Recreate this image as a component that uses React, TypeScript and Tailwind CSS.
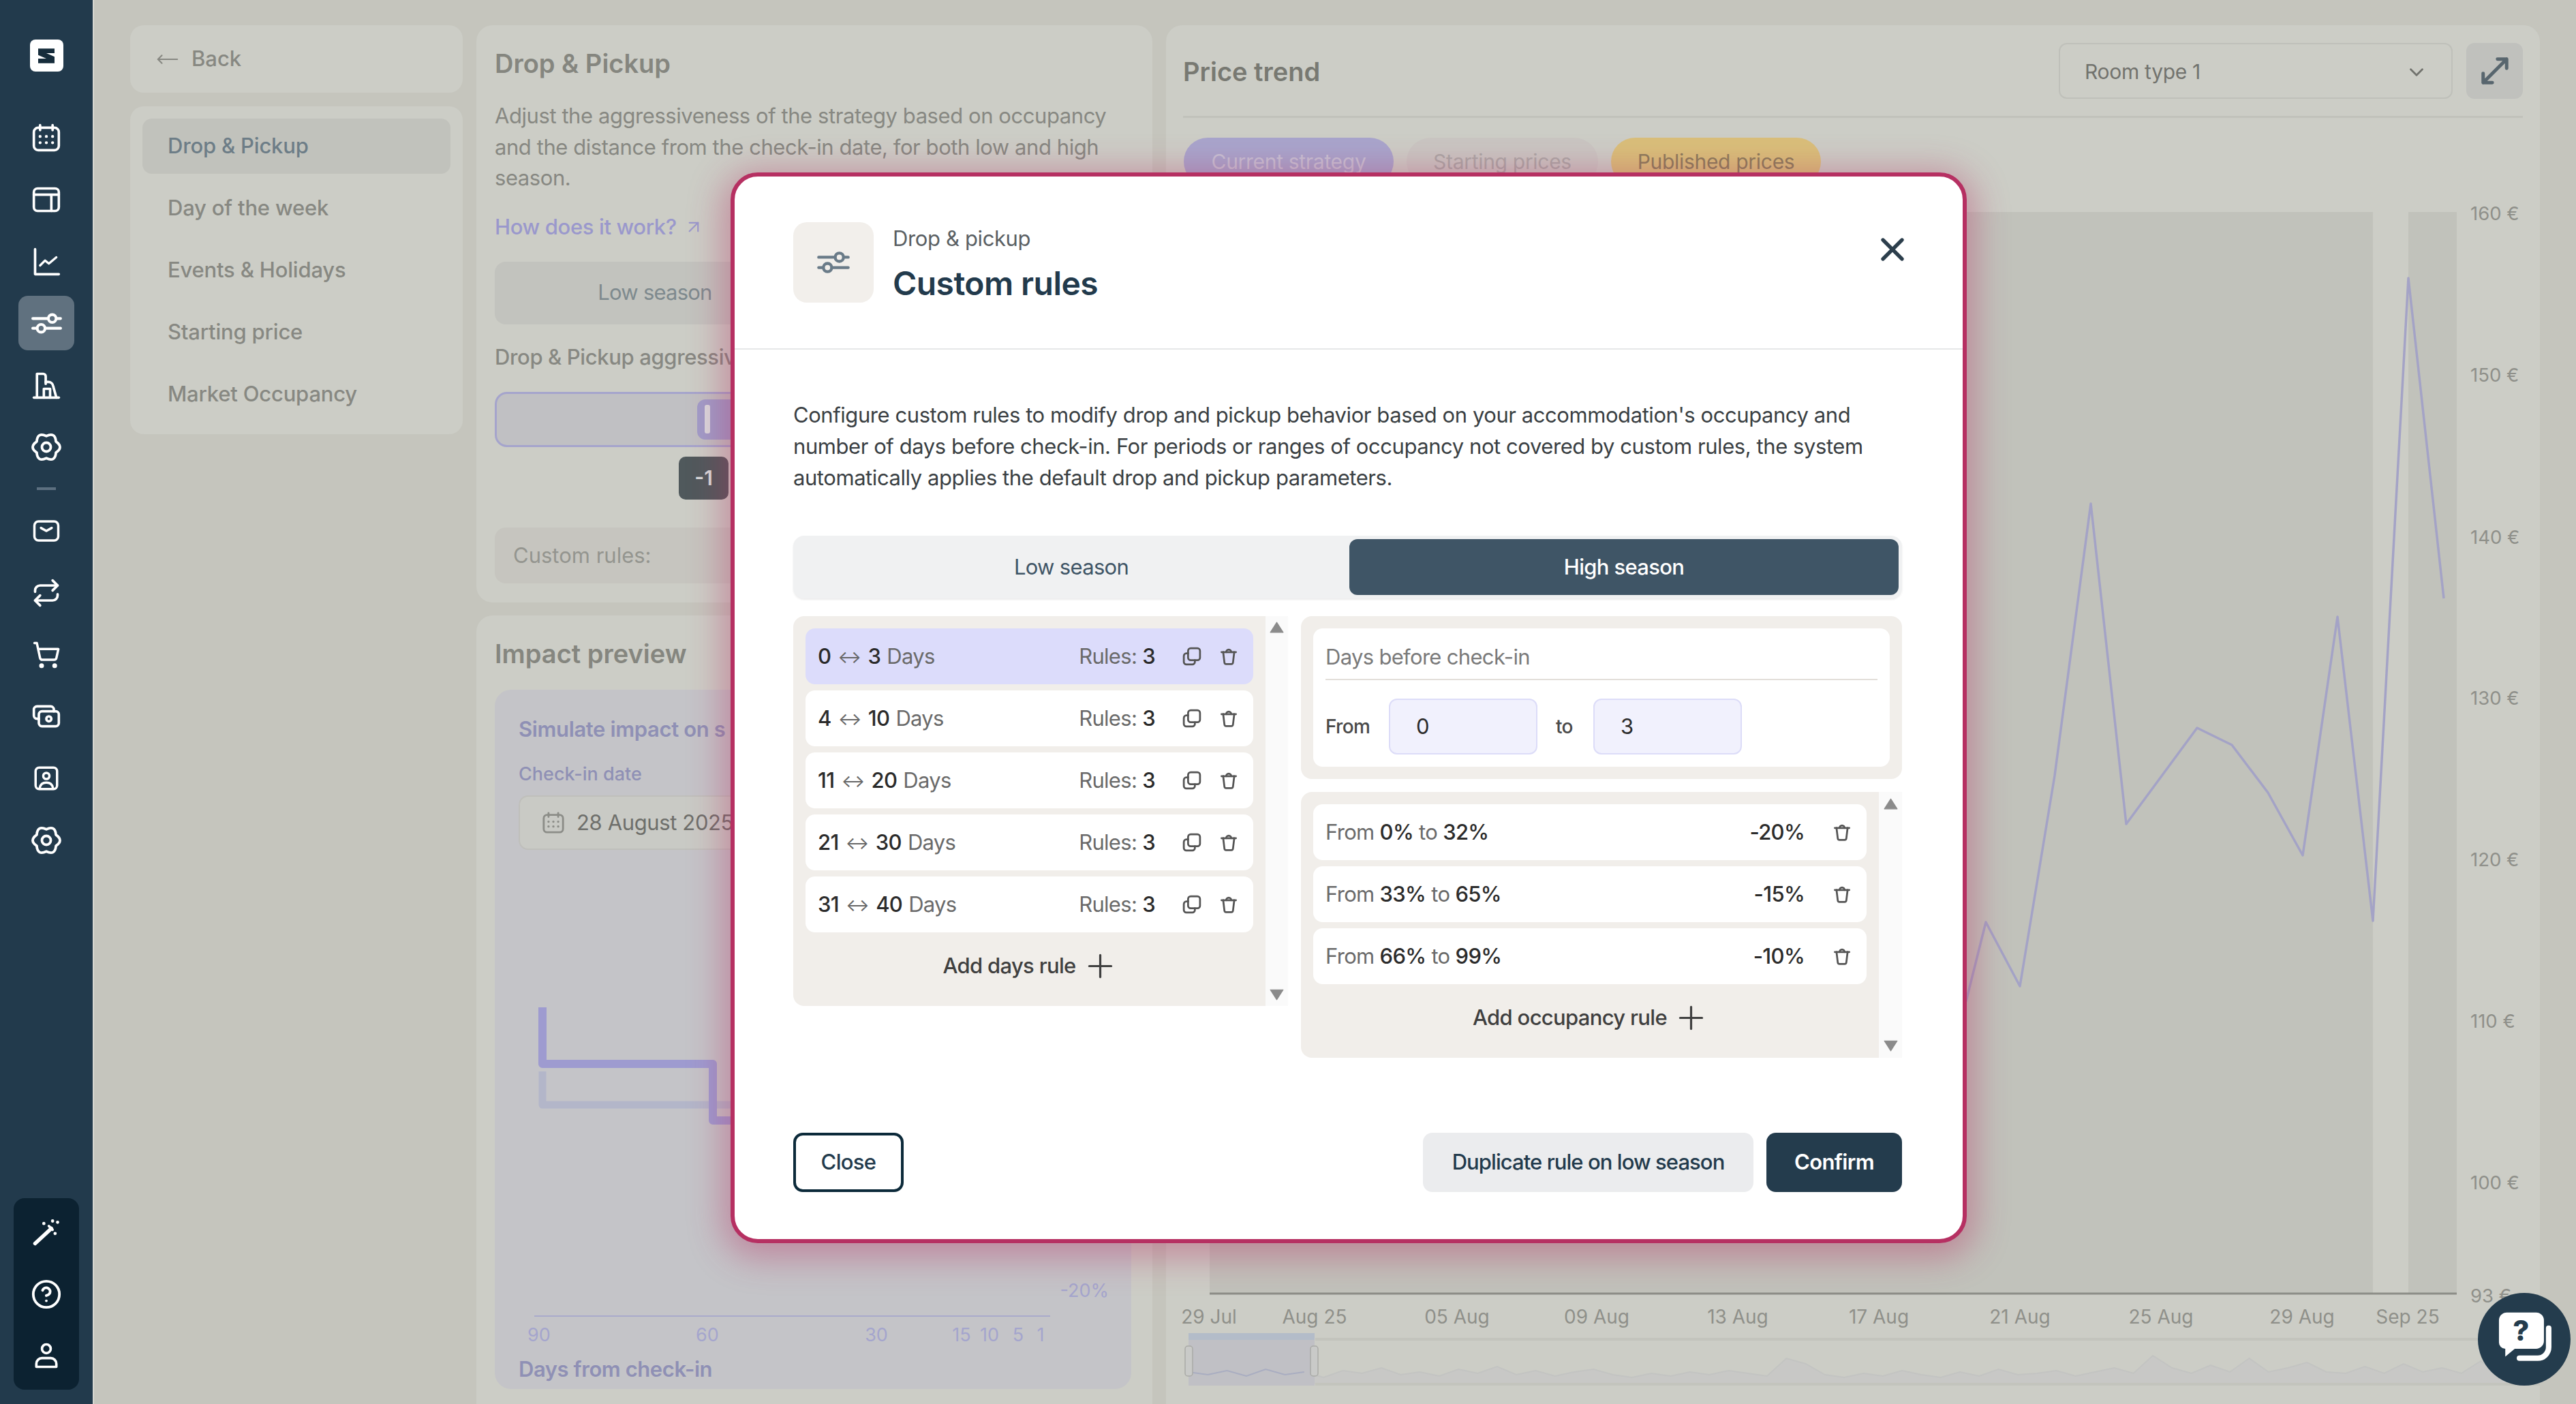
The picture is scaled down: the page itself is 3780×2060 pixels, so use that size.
import React from "react";
import { ChevronDown, Repeat, ShoppingCart, Plus, X, MoveLeft, ArrowUpRight, CircleHelp } from "lucide-react";

const sw = { fill: "none", stroke: "currentColor", strokeWidth: 2, strokeLinecap: "round", strokeLinejoin: "round" } as const;

const Svg = ({ className, children }: { className?: string; children: React.ReactNode }) => (
  <svg viewBox="0 0 24 24" className={className} {...sw}>
    {children}
  </svg>
);

const CalendarIcon = ({ className = "w-[44px] h-[44px]" }: { className?: string }) => (
  <Svg className={className}>
    <rect x="2" y="4" width="20" height="18" rx="3.5" />
    <path d="M7 2v4M17 2v4" />
    <path d="M7 11h.01M12 11h.01M17 11h.01M7 16h.01M12 16h.01M17 16h.01" strokeWidth="2.4" />
  </Svg>
);
const LayoutIcon = () => (
  <Svg className="w-[44px] h-[44px]">
    <rect x="2" y="3" width="20" height="18" rx="3" />
    <path d="M2 8h20M16 8v13" />
  </Svg>
);
const ChartIcon = () => (
  <Svg className="w-[44px] h-[44px]">
    <path d="M3 2v20h19" />
    <path d="M7 15l4-4 3 2.5 6-5" strokeWidth="1.8" />
  </Svg>
);
const SlidersIcon = ({ className = "w-[49px] h-[49px]" }: { className?: string }) => (
  <Svg className={className}>
    <path d="M2 8.500h11M19 8.500h3M2 15.500h3M11 15.500h11" />
    <circle cx="16" cy="8.500" r="2.800" />
    <circle cx="8" cy="15.500" r="2.800" />
  </Svg>
);
const BuildingIcon = () => (
  <Svg className="w-[44px] h-[44px]">
    <path d="M2 22h20" />
    <path d="M4.500 22V3h5a2 2 0 0 1 2 2v6" />
    <path d="M11.500 9.500h2a4 4 0 0 1 4 3.500l2.500 9" />
    <path d="M10 22v-7h5v7" />
  </Svg>
);
const FlowerGear = () => (
  <Svg className="w-[46px] h-[46px]">
    <path d="M12 3.500Q18.750 .31 19.360 7.750Q25.500 12 19.360 16.250Q18.750 23.690 12 20.500Q5.250 23.690 4.640 16.250Q-1.500 12 4.640 7.750Q5.250 .31 12 3.500z" />
    <circle cx="12" cy="12" r="3.400" />
  </Svg>
);
const MailIcon = () => (
  <Svg className="w-[42px] h-[42px]">
    <rect x="2" y="4" width="20" height="16" rx="3.5" />
    <path d="M7.5 9.5l4.5 2.5 4.5-2.5" />
  </Svg>
);
const MoneyIcon = () => (
  <Svg className="w-[44px] h-[44px]">
    <rect x="6" y="8" width="16" height="12" rx="2.5" />
    <path d="M18 8V6.5A2.5 2.5 0 0 0 15.5 4h-11A2.5 2.5 0 0 0 2 6.5v5A2.5 2.5 0 0 0 4.5 14H6" />
    <circle cx="14" cy="14" r="2" />
  </Svg>
);
const ContactIcon = () => (
  <Svg className="w-[42px] h-[42px]">
    <rect x="3" y="3" width="18" height="18" rx="3" />
    <circle cx="12" cy="10" r="2.6" />
    <path d="M6.5 20c.5-3 2.5-4.5 5.5-4.5s5 1.500 5.500 4.500" />
  </Svg>
);
const WandIcon = () => (
  <Svg className="w-[44px] h-[44px]">
    <path d="M3 21L16 9" strokeWidth="3" />
    <path d="M14 7l3 3" strokeWidth="2" />
    <path d="M10 5h.01M21 4h.01M19 13h.01M17 3h.01" strokeWidth="2.6" />
  </Svg>
);
const PersonIcon = () => (
  <Svg className="w-[44px] h-[44px]">
    <circle cx="12" cy="6.500" r="3.500" />
    <path d="M4 21v-2.500A4.500 4.500 0 0 1 8.500 14h7a4.500 4.500 0 0 1 4.500 4.500V21z" />
  </Svg>
);
const LogoIcon = () => (
  <div className="w-[49px] h-[47px] bg-white rounded-[8px] flex items-center justify-center">
    <svg viewBox="0 0 24 24" className="w-[36px] h-[32px]">
      <path d="M3 4H21V9H12L21 13V20H3V15H12L3 11z" fill="#162c3b" />
    </svg>
  </div>
);

const CopyIcon = () => (
  <Svg className="w-[30px] h-[30px] text-[#555]">
    <rect x="7.500" y="2.500" width="14" height="14" rx="3" strokeWidth="2.200" />
    <path d="M7.500 8.500h-2a3 3 0 0 0-3 3v7a3 3 0 0 0 3 3h7a3 3 0 0 0 3-3v-2" strokeWidth="2.200" />
  </Svg>
);
const TrashIcon = () => (
  <Svg className="w-[30px] h-[30px] text-[#555]">
    <path d="M3.500 7h17" strokeWidth="2.200" />
    <path d="M9 7a3 3 0 0 1 6 0" strokeWidth="2.200" />
    <path d="M5.500 7l1.500 12.500a2 2 0 0 0 2 1.500h6a2 2 0 0 0 2-1.500L18.500 7" strokeWidth="2.200" />
  </Svg>
);

const Triangle = ({ down }: { down?: boolean }) => (
  <svg viewBox="0 0 20 16" className={down ? "w-[21px] h-[17px] rotate-180" : "w-[21px] h-[17px]"}>
    <path d="M10 1l9 14H1z" fill="#8b8b8b" stroke="#8b8b8b" strokeLinejoin="round" />
  </svg>
);

const ScrollBar = ({ className }: { className: string }) => (
  <div className={`flex flex-col items-center justify-between bg-[#fafafa] ${className}`}>
    <Triangle />
    <Triangle down />
  </div>
);

const navTop = [
  <CalendarIcon key="cal" />,
  <LayoutIcon key="layout" />,
  <ChartIcon key="chart" />,
  <SlidersIcon key="sliders" />,
  <BuildingIcon key="building" />,
  <FlowerGear key="gear" />,
];
const navBottom = [
  <MailIcon key="mail" />,
  <Repeat key="swap" className="w-[44px] h-[44px]" strokeWidth={2} />,
  <ShoppingCart key="cart" className="w-[42px] h-[42px]" strokeWidth={2} />,
  <MoneyIcon key="money" />,
  <ContactIcon key="contact" />,
  <FlowerGear key="gear2" />,
];

function Sidebar() {
  return (
    <aside className="w-[138px] h-full shrink-0 bg-[#223a4c] border-r-2 border-[#d8d8d2] flex flex-col items-center text-white pt-[58px]">
      <LogoIcon />
      <div className="mt-[57px] flex flex-col gap-[10.800px]">
        {navTop.map((icon, i) => (
          <div
            key={i}
            className={`w-[82px] h-[80px] rounded-[14px] flex items-center justify-center ${i === 3 ? "bg-[#60717f]" : ""}`}
          >
            {icon}
          </div>
        ))}
      </div>
      <div className="w-[28px] h-[4px] bg-[#5d7080] mt-[19px] mb-[20px]" />
      <div className="flex flex-col gap-[10.800px]">
        {navBottom.map((icon, i) => (
          <div key={i} className="w-[82px] h-[80px] flex items-center justify-center">
            {icon}
          </div>
        ))}
      </div>
      <div className="mt-auto mb-[21px] w-[96px] h-[281px] rounded-[16px] bg-[#0c2231] flex flex-col items-center gap-[10.500px] pt-[10px]">
        <div className="h-[80px] flex items-center"><WandIcon /></div>
        <div className="h-[80px] flex items-center"><CircleHelp className="w-[46px] h-[46px]" strokeWidth={2} /></div>
        <div className="h-[80px] flex items-center"><PersonIcon /></div>
      </div>
    </aside>
  );
}

function SubNav() {
  const items = ["Drop & Pickup", "Day of the week", "Events & Holidays", "Starting price", "Market Occupancy"];
  return (
    <div className="w-[488px] shrink-0 flex flex-col gap-[20px]">
      <div className="h-[99px] rounded-[20px] bg-[#cccdc6] flex items-center pl-[38px] text-[#878882] text-[31px] font-medium">
        <MoveLeft className="w-[34px] h-[34px] mr-[18px]" strokeWidth={1.500} />
        Back
      </div>
      <div className="rounded-[20px] bg-[#cccdc6] p-[18px] flex flex-col gap-[10px] tracking-[-0.012em]">
        {items.map((t, i) => (
          <div
            key={t}
            className={`h-[81px] rounded-[14px] flex items-center pl-[37px] text-[31px] font-medium ${i === 0 ? "bg-[#c1c2bc] text-[#6d7d87]" : "text-[#878882]"}`}
          >
            {t}
          </div>
        ))}
      </div>
    </div>
  );
}

function StrategyPanel() {
  return (
    <div className="w-[992px] shrink-0 flex flex-col gap-[19px]">
      <section className="h-[847px] shrink-0 rounded-[24px] bg-[#cccdc6] px-[27px] pt-[33px]">
        <h2 className="text-[38px] leading-[46px] font-semibold text-[#85867f]">Drop &amp; Pickup</h2>
        <p className="mt-[31px] text-[31px] leading-[45.500px] tracking-[-0.014em] text-[#878882]">
          Adjust the aggressiveness of the strategy based on occupancy
          <br />
          and the distance from the check-in date, for both low and high
          <br />
          season.
        </p>
        <a className="mt-[26px] flex items-center gap-[10px] text-[31px] leading-[46px] font-medium tracking-[-0.012em] text-[#9a98cc]">
          How does it work? <ArrowUpRight className="w-[30px] h-[30px]" strokeWidth={1.800} />
        </a>
        <div className="mt-[28px] w-[940px] h-[92px] grid grid-cols-2">
          <div className="rounded-[16px] bg-[#c2c3be] flex items-center justify-center text-[31px] tracking-[-0.025em] text-[#7e8a8e]">Low season</div>
        </div>
        <div className="mt-[25px] text-[31px] leading-[46px] font-medium tracking-[-0.012em] text-[#878882]">Drop &amp; Pickup aggressiveness</div>
        <div className="mt-[28px] h-[81px] rounded-[18px] border-[3px] border-[#a5a4cc] bg-[#c0c0c3] flex items-center pl-[294px]">
          <div className="w-[120px] h-[59px] rounded-[12px] bg-[#a09cc8] flex items-center pl-[11px]">
            <div className="w-[8px] h-[42px] rounded-[3px] bg-[#d9d9dd]" />
          </div>
        </div>
        <div className="mt-[14px] ml-[270px] w-[73px] h-[63px] rounded-[10px] bg-[#50595c] flex items-center justify-center text-[#d8dada] text-[30px] font-semibold">-1</div>
        <div className="mt-[41px] h-[82px] rounded-[16px] bg-[#c6c5bf] flex items-center pl-[27px] pt-[2px] text-[31px] text-[#94958f]">Custom rules:</div>
      </section>
      <section className="h-[1200px] shrink-0 rounded-[24px] bg-[#cccdc6] px-[27px] pt-[33px]">
        <h2 className="text-[38px] leading-[46px] font-semibold text-[#85867f]">Impact preview</h2>
        <div className="mt-[30px] w-[934px] h-[1026px] rounded-[24px] bg-[#c4c4c8] pt-[35px]">
          <div className="ml-[35px] w-[310px] overflow-hidden whitespace-nowrap text-[31px] leading-[46px] font-semibold tracking-[-0.012em] text-[#8f90b5]">Simulate impact on s</div>
          <div className="pl-[35px] mt-[25px] text-[27px] leading-[36px] font-medium text-[#8f90b5]">Check-in date</div>
          <div className="ml-[35px] mt-[13px] w-[500px] h-[80px] rounded-[14px] border-2 border-[#bfbfbb] bg-[#c9cac5] flex items-center pl-[32px] text-[31px] text-[#6e6f6b] tracking-[-0.012em]">
            <CalendarIcon className="w-[34px] h-[34px] mr-[17px] text-[#8c8d88]" />
            28 August 2025
          </div>
          <svg viewBox="725 1267 934 718" className="mt-[20px] w-[934px] h-[718px]">
            <polyline points="795,1572 795,1621 1300,1621" fill="none" stroke="#b3b6c9" strokeWidth="11" strokeLinejoin="round" />
            <polyline points="795,1478 795,1561 1045,1561 1045,1644 1300,1644" fill="none" stroke="#9e9bd0" strokeWidth="12" strokeLinejoin="round" />
            <line x1="783" y1="1931" x2="1540" y2="1931" stroke="#a9aacb" strokeWidth="2" />
            <g fill="#a4a5cd" fontSize="27" textAnchor="middle">
              <text x="790" y="1968">90</text>
              <text x="1037" y="1968">60</text>
              <text x="1285" y="1968">30</text>
              <text x="1410" y="1968">15</text>
              <text x="1451" y="1968">10</text>
              <text x="1493" y="1968">5</text>
              <text x="1526" y="1968">1</text>
              <text x="1626" y="1903" textAnchor="end">-20%</text>
            </g>
          </svg>
          <div className="pl-[35px] mt-[2px] text-[31px] leading-[44px] font-semibold tracking-[-0.014em] text-[#8f90b5]">Days from check-in</div>
        </div>
      </section>
    </div>
  );
}

const trendPoints =
  "2830,1570 2885,1470 2914,1354 2964,1448 3015,1139 3068,740 3120,1210 3224,1069 3275,1094 3328,1164 3379,1256 3430,906 3482,1352 3534,409 3586,879";

const yTicks: [string, number][] = [
  ["160 €", 312], ["150 €", 549], ["140 €", 787], ["130 €", 1023], ["120 €", 1260], ["110 €", 1497], ["100 €", 1734], ["93 €", 1900],
];
const xTicks: [string, number][] = [
  ["29 Jul", 1774], ["Aug 25", 1929], ["05 Aug", 2138], ["09 Aug", 2343], ["13 Aug", 2550], ["17 Aug", 2757], ["21 Aug", 2964], ["25 Aug", 3171], ["29 Aug", 3378], ["Sep 25", 3533],
];

// rough overview line under the navigator
const spark = [12,14,11,15,10,14,12,16,11,13,9,14,12,15,10,13,8,14,11,15,12,10,14,16,13,15,12,14,11,13,15,2,6,14,16,13,15,11,14,16,12,15,10,14,13,11,15,12,9,13,0,9,13,7,12,2,12,9,5,12,13,8,13,6,12,9,13,4,14,13,15];
const sparkPts = spark.map((v, i) => `${1744 + i * 28.300},${1990 + v * 2}`).join(" ");

function PriceTrend() {
  return (
    <section className="w-[2016px] h-[2100px] shrink-0 rounded-[24px] bg-[#cccdc6] overflow-hidden">
      <div className="mx-[25px] h-[136px] flex items-center border-b-[3px] border-[#c1c2bb] pt-[4px]">
        <h2 className="text-[38px] font-semibold text-[#787972]">Price trend</h2>
        <div className="ml-auto -mt-[4px] w-[578px] h-[82px] rounded-[12px] border-2 border-[#bfc0ba] flex items-center justify-between pl-[36px] pr-[34px] pt-[4px] text-[30px] tracking-[-0.01em] text-[#72736e]">
          Room type 1
          <ChevronDown className="w-[34px] h-[34px]" strokeWidth={2} />
        </div>
        <div className="ml-[20px] -mt-[4px] w-[83px] h-[82px] rounded-[12px] bg-[#c0c1bd] flex items-center justify-center text-[#58666e]">
          <Svg className="w-[46px] h-[46px]">
            <path d="M14 3h7v7M21 3L3 21M3 14v7h7" strokeWidth="2.600" />
          </Svg>
        </div>
      </div>
      <div className="mx-[26px] mt-[29px] flex gap-[19px] text-[30px] tracking-[-0.01em]">
        <div className="w-[308px] h-[70px] rounded-full bg-[#a8a5cc] flex items-center justify-center text-[#c6c3d6]">Current strategy</div>
        <div className="w-[281px] h-[70px] rounded-full bg-[#c9c6c2] flex items-center justify-center text-[#aaa8a6]">Starting prices</div>
        <div className="w-[308px] h-[70px] rounded-full bg-[#d9bf7a] flex items-center justify-center text-[#8a7d5a]">Published prices</div>
      </div>
      <svg viewBox="1711 290 2016 1770" className="w-[2016px] h-[1770px] mt-[17px]">
        <rect x="1775" y="312" width="1707" height="1587" fill="#c1c2bb" />
        <rect x="3534" y="312" width="71" height="1587" fill="#c1c2bb" />
        <line x1="1775" y1="1899" x2="3605" y2="1899" stroke="#8c8d87" strokeWidth="3" />
        <polyline points={trendPoints} fill="none" stroke="#a4a3c6" strokeWidth="3.500" strokeLinejoin="round" />
        <g fill="#8f908a" fontSize="27.500">
          {yTicks.map(([t, y]) => (
            <text key={t} x="3625" y={y + 12}>{t}</text>
          ))}
        </g>
        <g fill="#8f908a" fontSize="28" textAnchor="middle">
          {xTicks.map(([t, x]) => (
            <text key={t} x={x} y="1943">{t}</text>
          ))}
        </g>
        <polygon points={`1744,2032 ${sparkPts} 3727,2032`} fill="#c8c8c6" />
        <polyline points={sparkPts} fill="none" stroke="#c3c4c2" strokeWidth="2" />
        <line x1="1930" y1="1966" x2="3727" y2="1966" stroke="#c3c4bd" strokeWidth="4" />
        <line x1="1930" y1="2032" x2="3727" y2="2032" stroke="#c3c4bd" strokeWidth="4" />
        <rect x="1744" y="1957" width="185" height="77" fill="#c0c0c5" />
        <rect x="1744" y="1957" width="185" height="10" fill="#b3bcc9" />
        <polyline points={sparkPts.split(" ").slice(0, 7).join(" ")} fill="none" stroke="#a9adc1" strokeWidth="2" />
        <rect x="1739" y="1976" width="11" height="44" rx="4" fill="#c9cac8" stroke="#a9aaa6" strokeWidth="1.500" />
        <rect x="1923" y="1976" width="11" height="44" rx="4" fill="#c9cac8" stroke="#a9aaa6" strokeWidth="1.500" />
      </svg>
    </section>
  );
}

const dayRules = [
  ["0", "3"],
  ["4", "10"],
  ["11", "20"],
  ["21", "30"],
  ["31", "40"],
];

const occRules = [
  ["0%", "32%", "-20%"],
  ["33%", "65%", "-15%"],
  ["66%", "99%", "-10%"],
];

function Modal() {
  return (
    <div className="absolute left-[1072px] top-[253px] w-[1814px] h-[1571px] bg-white rounded-[40px] border-[6px] border-[#b63062] shadow-[0_10px_50px_12px_rgba(182,48,98,0.4)] text-[31px] tracking-[-0.022em] font-[Inter,sans-serif]">
      <header className="flex h-[254px] pl-[86px] pr-[75px] pt-[67px] border-b-2 border-[#e6e7e8]">
        <div className="w-[118px] h-[118px] rounded-[20px] bg-[#f2efeb] flex items-center justify-center text-[#6a7b88]">
          <SlidersIcon className="w-[52px] h-[52px]" />
        </div>
        <div className="ml-[28px]">
          <div className="text-[#5a5f63] leading-[46px] tracking-[-0.012em] mt-[1px]">Drop &amp; pickup</div>
          <h1 className="text-[#223a4c] text-[48px] leading-[56px] font-semibold tracking-[-0.012em] mt-[15px]">Custom rules</h1>
        </div>
        <X className="ml-auto mt-[12px] w-[56px] h-[56px] text-[#2c3e4c]" strokeWidth={2.300} />
      </header>
      <div className="px-[86px] pt-[73px]">
        <p className="text-[#3a3f43] leading-[46px] tracking-[-0.014em] whitespace-nowrap">
          Configure custom rules to modify drop and pickup behavior based on your accommodation's occupancy and
          <br />
          number of days before check-in. For periods or ranges of occupancy not covered by custom rules, the system
          <br />
          automatically applies the default drop and pickup parameters.
        </p>
        <div className="mt-[62px] h-[92px] w-[1627px] rounded-[16px] bg-[#f0f1f2] shadow-[0_2px_3px_rgba(0,0,0,0.08)] p-[5px] grid grid-cols-2 gap-[5px]">
          <div className="flex items-center justify-center text-[#3f5566]">Low season</div>
          <div className="rounded-[12px] bg-[#3f5566] flex items-center justify-center text-white font-medium">High season</div>
        </div>
        <div className="mt-[26px] w-[1627px] grid grid-cols-[726px_882px] gap-[19px] items-start">
          <div className="flex h-[572px]">
            <div className="w-[693px] rounded-l-[16px] bg-[#f1eeea] p-[18px] flex flex-col">
              <div className="flex flex-col gap-[9px]">
                {dayRules.map(([from, to], i) => (
                  <div
                    key={from}
                    className={`h-[82px] rounded-[14px] pl-[18px] pr-[20px] flex items-center ${i === 0 ? "bg-[#dcdcfb]" : "bg-white"}`}
                  >
                    <span className="font-medium text-[#2b2b2b]">{from}</span>
                    <span className="mx-[10px] text-[26px] text-[#666]">↔</span>
                    <span className="font-medium text-[#2b2b2b]">{to}</span>
                    <span className="ml-[9px] text-[#6a6a6a]">Days</span>
                    <span className="ml-auto -mr-[2px] text-[#6a6a6a]">Rules: <span className="font-medium text-[#2b2b2b]">3</span></span>
                    <span className="ml-[40px] w-[32px] flex justify-center"><CopyIcon /></span>
                    <span className="ml-[22px] w-[32px] flex justify-center"><TrashIcon /></span>
                  </div>
                ))}
              </div>
              <div className="mt-[24px] h-[50px] flex items-center justify-center gap-[8px] pl-[4px] text-[#3f3f3f] font-medium">
                Add days rule <Plus className="w-[55px] h-[55px]" strokeWidth={1.400} />
              </div>
            </div>
            <ScrollBar className="w-[33px] py-[8px]" />
          </div>
          <div className="flex flex-col gap-[19px]">
            <div className="rounded-[16px] bg-[#f1eeea] p-[18px]">
              <div className="rounded-[14px] bg-white px-[18px] h-[203px] pt-[22px]">
                <div className="leading-[40px] pb-[12px] border-b-2 border-[#e3dfda] text-[#7a7a7a]">Days before check-in</div>
                <div className="mt-[27px] flex items-center">
                  <span className="w-[93px] text-[28px] font-medium text-[#4a4a4a]">From</span>
                  <div className="w-[218px] h-[82px] rounded-[12px] bg-[#f1f1fd] border-2 border-[#dcdcf8] flex items-center pl-[38px] text-[#2b2b2b]">0</div>
                  <span className="w-[82px] pl-[27px] text-[28px] font-medium text-[#4a4a4a]">to</span>
                  <div className="w-[218px] h-[82px] rounded-[12px] bg-[#f1f1fd] border-2 border-[#dcdcf8] flex items-center pl-[38px] text-[#2b2b2b]">3</div>
                </div>
              </div>
            </div>
            <div className="flex h-[390px]">
              <div className="w-[848px] rounded-l-[16px] bg-[#f1eeea] p-[18px] flex flex-col">
                <div className="flex flex-col gap-[9px]">
                  {occRules.map(([from, to, pct]) => (
                    <div key={from} className="h-[82px] rounded-[14px] bg-white pl-[18px] pr-[20px] flex items-center text-[#6a6a6a]">
                      From&nbsp;<span className="font-medium text-[#2b2b2b]">{from}</span>&nbsp;to&nbsp;<span className="font-medium text-[#2b2b2b]">{to}</span>
                      <span className="ml-auto font-medium text-[#2b2b2b]">{pct}</span>
                      <span className="ml-[39px] w-[32px] flex justify-center"><TrashIcon /></span>
                    </div>
                  ))}
                </div>
                <div className="mt-[24px] h-[50px] flex items-center justify-center gap-[8px] pl-[4px] text-[#3f3f3f] font-medium">
                  Add occupancy rule <Plus className="w-[55px] h-[55px]" strokeWidth={1.400} />
                </div>
              </div>
              <ScrollBar className="w-[34px] py-[9px]" />
            </div>
          </div>
        </div>
        <footer className="mt-[110px] w-[1627px] flex items-start">
          <button className="w-[162px] h-[87px] rounded-[14px] border-[4px] border-[#0c2a3a] text-[#223a4c] font-medium">Close</button>
          <button className="ml-auto w-[485px] h-[87px] rounded-[14px] bg-[#ebecee] text-[#223a4c] font-medium tracking-[-0.03em]">Duplicate rule on low season</button>
          <button className="ml-[19px] w-[199px] h-[87px] rounded-[14px] bg-[#243c4d] text-white font-semibold">Confirm</button>
        </footer>
      </div>
    </div>
  );
}

function HelpBubble() {
  return (
    <div className="absolute left-[3636px] top-[1897px] w-[136px] h-[136px] rounded-full bg-[#243c4d] flex items-center justify-center">
      <svg viewBox="0 0 72 76" className="w-[84px] h-[88px]">
        <path d="M4 14a10 10 0 0 1 10-10h37a10 10 0 0 1 10 10v26a10 10 0 0 1-10 10H24L12 60V50a8 8 0 0 1-8-8z" fill="#fff" />
        <path d="M67 24v24a14 14 0 0 1-14 14H30" fill="none" stroke="#fff" strokeWidth="7" strokeLinecap="round" />
        <text x="32" y="40" textAnchor="middle" fontSize="36" fontWeight="800" fill="#243c4d">?</text>
      </svg>
    </div>
  );
}

export default function App() {
  return (
    <div className="relative w-[3780px] h-[2060px] overflow-hidden bg-[#c5c5bd] flex font-[Inter,sans-serif]">
      <Sidebar />
      <main className="flex items-start gap-[20px] pl-[53px] pt-[37px]">
        <SubNav />
        <StrategyPanel />
        <PriceTrend />
      </main>
      <Modal />
      <HelpBubble />
    </div>
  );
}
